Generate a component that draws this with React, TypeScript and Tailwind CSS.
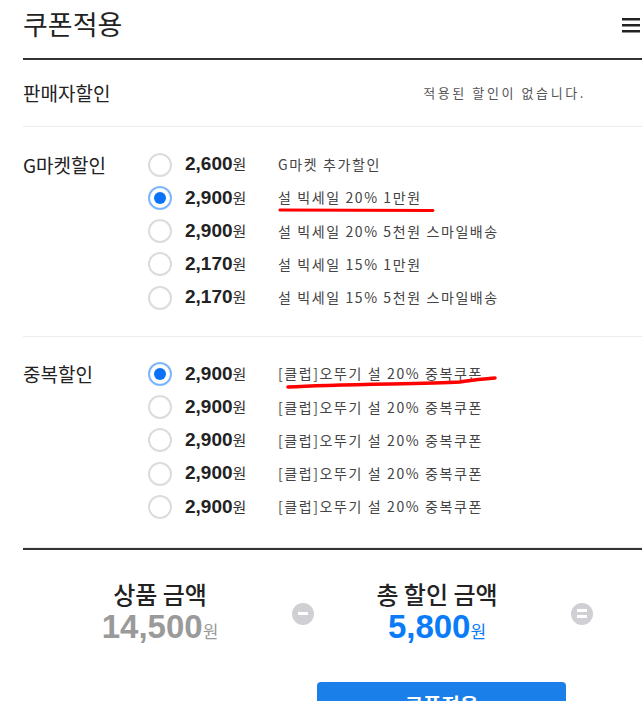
import React from 'react';

type Row = { price: string; label: string; checked?: boolean };

const gmarket: Row[] = [
  { price: '2,600', label: 'G마켓 추가할인' },
  { price: '2,900', label: '설 빅세일 20% 1만원', checked: true },
  { price: '2,900', label: '설 빅세일 20% 5천원 스마일배송' },
  { price: '2,170', label: '설 빅세일 15% 1만원' },
  { price: '2,170', label: '설 빅세일 15% 5천원 스마일배송' },
];

const stacked: Row[] = [
  { price: '2,900', label: '[클럽]오뚜기 설 20% 중복쿠폰', checked: true },
  { price: '2,900', label: '[클럽]오뚜기 설 20% 중복쿠폰' },
  { price: '2,900', label: '[클럽]오뚜기 설 20% 중복쿠폰' },
  { price: '2,900', label: '[클럽]오뚜기 설 20% 중복쿠폰' },
  { price: '2,900', label: '[클럽]오뚜기 설 20% 중복쿠폰' },
];

const Radio = ({ checked }: { checked?: boolean }) =>
  checked ? (
    <span className="flex h-[24px] w-[24px] items-center justify-center rounded-full border-2 border-[#7db5ff] bg-white">
      <span className="h-[12px] w-[12px] rounded-full bg-[#0a72f5]" />
    </span>
  ) : (
    <span className="h-[24px] w-[24px] rounded-full border-2 border-[#dcdcdc] bg-white" />
  );

const CouponRow = ({ row }: { row: Row }) => (
  <div className="flex h-[33.25px] items-center">
    <Radio checked={row.checked} />
    <div className="ml-[13px] flex w-[93px] items-baseline">
      <span className="font-['Liberation_Sans',sans-serif] text-[19px] font-bold text-[#222]">{row.price}</span>
      <span className="text-[15px] text-[#333]">원</span>
    </div>
    <span className="text-[14px] tracking-[1.6px] text-[#444]">{row.label}</span>
  </div>
);

const Section = ({ title, rows, pad }: { title: string; rows: Row[]; pad: string }) => (
  <div className={`flex border-b border-[#ececec] ${pad}`}>
    <div className="w-[125px] text-[19px] leading-[33px] text-[#222]">{title}</div>
    <div className="flex flex-col">
      {rows.map((r, i) => (
        <CouponRow key={i} row={r} />
      ))}
    </div>
  </div>
);

const SignIcon = ({ equal }: { equal?: boolean }) => (
  <span className="flex h-[22px] w-[22px] flex-col items-center justify-center gap-[3px] rounded-full bg-[#cfcfd4]">
    <span className="h-[3px] w-[10px] bg-white" />
    {equal && <span className="h-[3px] w-[10px] bg-white" />}
  </span>
);

export default function App() {
  return (
    <div className="relative h-[701px] w-full overflow-hidden bg-white pl-[23px] font-['Noto_Sans_CJK_KR',sans-serif] text-[#222]">
      {/* header */}
      <div className="flex h-[60px] items-start justify-between border-b-2 border-[#333]">
        <h1 className="pt-[5px] text-[27px] leading-[38px] font-normal text-[#222]">쿠폰적용</h1>
        <svg className="mr-[2px] mt-[17px]" width="18" height="16" viewBox="0 0 18 16">
          <rect x="0" y="1" width="18" height="2.5" fill="#222" />
          <rect x="0" y="7" width="18" height="2.5" fill="#222" />
          <rect x="0" y="13" width="18" height="2.5" fill="#222" />
        </svg>
      </div>

      {/* seller discount */}
      <div className="flex h-[67px] items-center justify-between border-b border-[#ececec] pr-[56px]">
        <span className="text-[19px] text-[#222]">판매자할인</span>
        <span className="text-[13px] tracking-[2.6px] text-[#555]">적용된 할인이 없습니다.</span>
      </div>

      <Section title="G마켓할인" rows={gmarket} pad="pt-[21px] pb-[22px]" />
      <Section title="중복할인" rows={stacked} pad="pt-[20px] pb-[23px]" />

      {/* summary */}
      <div className="border-t-2 border-[#333]">
        <div className="flex items-center pt-[29px]">
          <div className="ml-[12px] w-[250px] text-center">
            <div className="text-[24px] leading-[30px] font-medium text-[#222]">상품 금액</div>
            <div className="flex items-baseline justify-center leading-[36px]">
              <span className="font-['Liberation_Sans',sans-serif] text-[33px] font-bold text-[#9a9a9a]">14,500</span>
              <span className="text-[17px] text-[#9a9a9a]">원</span>
            </div>
          </div>
          <div className="ml-[7px]">
            <SignIcon />
          </div>
          <div className="ml-[8px] w-[230px] text-center">
            <div className="text-[24px] leading-[30px] font-medium text-[#222]">총 할인 금액</div>
            <div className="flex items-baseline justify-center leading-[36px]">
              <span className="font-['Liberation_Sans',sans-serif] text-[33px] font-bold text-[#0a7cf8]">5,800</span>
              <span className="text-[17px] text-[#0a7cf8]">원</span>
            </div>
          </div>
          <div className="ml-[19px]">
            <SignIcon equal />
          </div>
        </div>
        <button className="ml-[294px] mt-[33px] h-[52px] w-[249px] rounded-[4px] bg-[#1a7fe8] pb-[6px] text-[20px] font-bold text-white">
          쿠폰적용
        </button>
      </div>

      {/* hand-drawn red marks */}
      <svg className="pointer-events-none absolute left-0 top-0" width="642" height="701">
        <path d="M280 210 L433 210.5" stroke="#ff0000" strokeWidth="3" fill="none" strokeLinecap="round" />
        <path d="M288 387 C340 384 420 384 460 382 C470 380 485 379 495 378" stroke="#ff0000" strokeWidth="3.5" fill="none" strokeLinecap="round" />
      </svg>
    </div>
  );
}
